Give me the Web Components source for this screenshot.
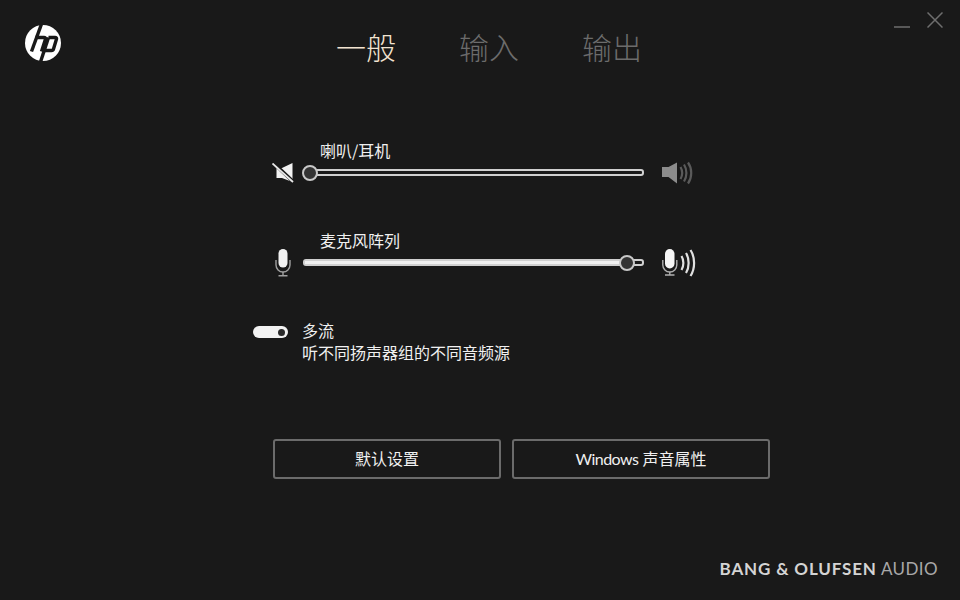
<!DOCTYPE html>
<html lang="zh">
<head>
<meta charset="utf-8">
<title>HP Audio</title>
<style>
  html, body { margin: 0; height: 100%; background: #191919; }
  body { font-family: "Noto Sans CJK SC", "Open Sans", sans-serif; color: #eee; overflow: hidden; }
  .latin { letter-spacing: -.5px; }
</style>
</head>
<body>
<audio-app>
  <app-header slot="header">
    <nav-tab active>一般</nav-tab>
    <nav-tab>输入</nav-tab>
    <nav-tab>输出</nav-tab>
  </app-header>
  <volume-row label="喇叭/耳机" value="0">
    <svg slot="left" width="22" height="20" viewBox="0 0 22 20">
      <path d="M4.500 5H10L20.500 0v19L10 15H4.500z" fill="#f2f2f2"/>
      <path d="M1.500 0l20 19" stroke="#191919" stroke-width="3.600"/>
      <path d="M.5 .5l20.500 18.500" stroke="#e8e8e8" stroke-width="1.800"/>
    </svg>
    <svg slot="right" width="32" height="24" viewBox="0 0 32 24">
      <path d="M0 6h6.500L15 1.500v21L6.500 16H0z" fill="#8c8c8c"/>
      <g fill="none" stroke="#5a5a5a" stroke-width="2.200">
        <path d="M18.500 6c2 3.500 2 8.500 0 12"/>
        <path d="M22 3.500c3.200 5 3.200 12 0 17"/>
        <path d="M26 1.500c4.300 6 4.300 15 0 21"/>
      </g>
    </svg>
  </volume-row>
  <volume-row label="麦克风阵列" value="100">
    <svg slot="left" width="22" height="28" viewBox="0 0 22 28">
      <rect x="6.500" y="0" width="9" height="18.500" rx="4.500" fill="#f2f2f2"/>
      <g fill="none" stroke="#a0a0a0" stroke-width="1.400">
        <path d="M4 11v5a7 7 0 0 0 14 0v-5"/>
        <path d="M11 23v4M6.500 26.800h9"/>
      </g>
    </svg>
    <svg slot="right" width="36" height="28" viewBox="0 0 36 28">
      <rect x="3" y="0" width="9.500" height="19.500" rx="4.700" fill="#f5f5f5"/>
      <g fill="none" stroke="#b0b0b0" stroke-width="1.400">
        <path d="M.8 11v5a7 7 0 0 0 14 0v-5"/>
        <path d="M7.800 23v3.500M3 26h9.500"/>
      </g>
      <g fill="none" stroke="#e0e0e0" stroke-width="2.200">
        <path d="M19.500 7c2.500 4 2.500 10 0 14"/>
        <path d="M24 4c3.500 5.500 3.500 14.500 0 20"/>
        <path d="M28.500 1c4.800 7.500 4.800 18.500 0 26"/>
      </g>
    </svg>
  </volume-row>
  <stream-toggle title-text="多流">听不同扬声器组的不同音频源</stream-toggle>
  <button-bar>
    <action-button style="--w:228px">默认设置</action-button>
    <action-button style="--w:258px"><span class="latin">Windows</span> 声音属性</action-button>
  </button-bar>
  <brand-footer></brand-footer>
</audio-app>

<script>
class AudioApp extends HTMLElement {
  constructor() {
    super();
    this.attachShadow({mode: "open"}).innerHTML = `
      <style>
        :host { display: flex; flex-direction: column; height: 600px; box-sizing: border-box; }
        main { display: flex; flex-direction: column; flex: 1; }
      </style>
      <slot name="header"></slot>
      <main><slot></slot></main>`;
  }
}

class AppHeader extends HTMLElement {
  constructor() {
    super();
    this.attachShadow({mode: "open"}).innerHTML = `
      <style>
        :host { display: flex; height: 140px; align-items: flex-start; }
        .logo { margin: 25px 0 0 25px; width: 36px; height: 36px; display: block; flex: none; }
        .tabs { display: flex; gap: 63px; margin: 23px 0 0 275px; }
        .win { margin-left: auto; display: flex; padding: 12px 17px 0 0; gap: 17px; }
      </style>
      <svg class="logo" viewBox="0 0 36 36">
        <circle cx="18" cy="18" r="18" fill="#fff"/>
        <g fill="none" stroke="#191919" stroke-width="3.400">
          <path d="M16.500 -1L6.500 26.500"/>
          <path d="M10.500 12.500H19q2 0 1.500 1.500L16.500 26.500"/>
          <path d="M23.500 12.500L15.500 37"/>
          <path d="M23.500 12.500H30q2 0 1.500 1.500L28.500 24q-.4 1.500-2 1.500H20"/>
        </g>
      </svg>
      <div class="tabs"><slot></slot></div>
      <div class="win">
        <svg width="16" height="16" viewBox="0 0 16 16"><path d="M0 15h16" stroke="#6e6e6e" stroke-width="1.500"/></svg>
        <svg width="16" height="16" viewBox="0 0 16 16"><path d="M.5 .5l15 15M15.500 .5l-15 15" stroke="#6e6e6e" stroke-width="1.500"/></svg>
      </div>`;
  }
}

class NavTab extends HTMLElement {
  constructor() {
    super();
    this.attachShadow({mode: "open"}).innerHTML = `
      <style>
        :host { display: block; font-size: 30px; line-height: 46px; font-weight: 300; color: #6c6c6c; }
        :host([active]) { color: #f2e3d0; }
      </style>
      <slot></slot>`;
  }
}

class VolumeRow extends HTMLElement {
  constructor() {
    super();
    this.attachShadow({mode: "open"}).innerHTML = `
      <style>
        :host { display: grid; grid-template-columns: 303px 341px 1fr; grid-template-rows: 22px 22px; height: 44px; margin-bottom: 46px; }
        .label { grid-column: 2; font-size: 16px; line-height: 22px; margin-top: -1px; padding-left: 17px; color: #f0f0f0; }
        .left { grid-column: 1; display: flex; align-items: center; justify-content: flex-end; padding-right: 9px; }
        .right { display: flex; align-items: center; padding-left: 18px; }
        .track { position: relative; height: 7px; margin-top: 7px; box-sizing: border-box; border: 2px solid #d0d0d0; border-radius: 3px; background: #191919; }
        .fill { height: 100%; background: #f0f0f0; }
        .thumb { position: absolute; top: -6px; width: 16px; height: 16px; box-sizing: border-box; border: 2px solid #c8c8c8; border-radius: 50%; background: #333; margin-left: -8px; }
      </style>
      <div class="label"></div>
      <div class="left"><slot name="left"></slot></div>
      <div class="track"><div class="fill"></div><div class="thumb"></div></div>
      <div class="right"><slot name="right"></slot></div>`;
  }
  connectedCallback() {
    let val = Number(this.getAttribute("value"));
    let pos = val == 0 ? 5 : 322;
    this.shadowRoot.querySelector(".label").textContent = this.getAttribute("label");
    this.shadowRoot.querySelector(".fill").style.width = pos + "px";
    this.shadowRoot.querySelector(".thumb").style.left = pos + "px";
  }
}

class StreamToggle extends HTMLElement {
  constructor() {
    super();
    this.attachShadow({mode: "open"}).innerHTML = `
      <style>
        :host { display: flex; align-items: flex-start; padding-left: 253px; font-size: 16px; line-height: 22px; color: #f0f0f0; }
        .pill { width: 35px; height: 12px; margin: 6px 14px 0 0; padding-right: 3px; box-sizing: border-box; border-radius: 6px; background: #f2f2f2; display: flex; align-items: center; justify-content: flex-end; flex: none; }
        .knob { width: 7px; height: 7px; border-radius: 50%; background: #2a2a2a; }
        .text { margin-top: -1px; }
      </style>
      <div class="pill"><div class="knob"></div></div>
      <div class="text"><div class="title"></div><slot></slot></div>`;
  }
  connectedCallback() {
    this.shadowRoot.querySelector(".title").textContent = this.getAttribute("title-text");
  }
}

class ButtonBar extends HTMLElement {
  constructor() {
    super();
    this.attachShadow({mode: "open"}).innerHTML = `
      <style>
        :host { display: flex; gap: 11px; padding: 76px 0 0 273px; }
      </style>
      <slot></slot>`;
  }
}

class ActionButton extends HTMLElement {
  constructor() {
    super();
    this.attachShadow({mode: "open"}).innerHTML = `
      <style>
        :host { display: block; width: var(--w); height: 40px; box-sizing: border-box; border: 2px solid #6b6b6b; border-radius: 3px; font-size: 16px; line-height: 36px; text-align: center; color: #f0f0f0; font-family: Lato, "Noto Sans CJK SC", sans-serif; }
      </style>
      <slot></slot>`;
  }
}

class BrandFooter extends HTMLElement {
  constructor() {
    super();
    this.attachShadow({mode: "open"}).innerHTML = `
      <style>
        :host { display: flex; justify-content: flex-end; margin-top: auto; padding: 0 22px 20px 0; font-family: Lato, "Open Sans", sans-serif; font-size: 17px; line-height: 22px; letter-spacing: .85px; color: #d4d4d4; white-space: pre; }
        b { font-weight: 700; }
        span { font-weight: 400; color: #a8a8a8; letter-spacing: .4px; }
      </style>
      <b>BANG &amp; OLUFSEN</b><span> AUDIO</span>`;
  }
}

customElements.define("audio-app", AudioApp);
customElements.define("app-header", AppHeader);
customElements.define("nav-tab", NavTab);
customElements.define("volume-row", VolumeRow);
customElements.define("stream-toggle", StreamToggle);
customElements.define("button-bar", ButtonBar);
customElements.define("action-button", ActionButton);
customElements.define("brand-footer", BrandFooter);
</script>
</body>
</html>
